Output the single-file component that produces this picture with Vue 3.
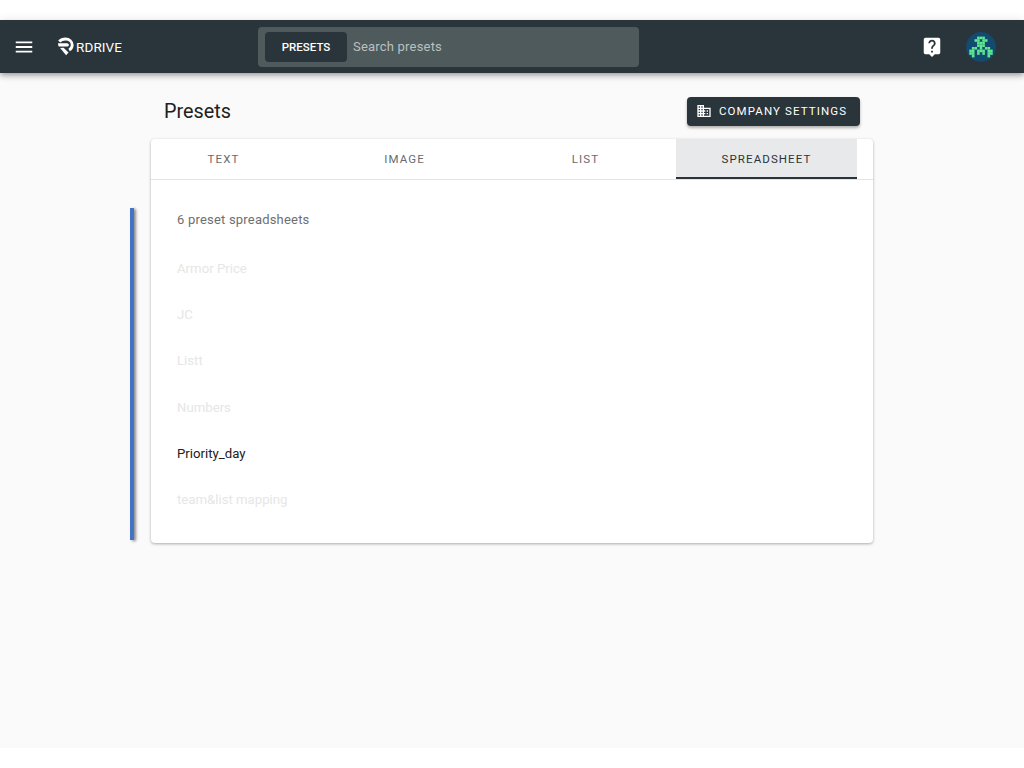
<script setup>
const tabs = ['Text', 'Image', 'List', 'Spreadsheet']
const presets = [
  { name: 'Armor Price', active: false },
  { name: 'JC', active: false },
  { name: 'Listt', active: false },
  { name: 'Numbers', active: false },
  { name: 'Priority_day', active: true },
  { name: 'team&list mapping', active: false }
]
// space invader avatar, one string per row
const invader = [
  '...###...',
  '..##.##..',
  '...###...',
  '...###...',
  '.##.#.##.',
  '##.###.##',
  '##.#.#.##',
  '.#.....#.'
]
const cells = []
invader.forEach((row, y) => {
  row.split('').forEach((c, x) => {
    if (c === '#') cells.push({ x, y })
  })
})
</script>

<template>
  <div class="app-shell">
    <header class="topbar">
      <button type="button" class="menu-btn" aria-label="Menu">
        <svg width="22" height="22" viewBox="0 0 24 24"><path fill="#fff" d="M3 18h18v-2H3v2zm0-5h18v-2H3v2zm0-7v2h18V6H3z" /></svg>
      </button>
      <div class="logo">
        <svg width="17" height="19" viewBox="0 0 19 20">
          <path fill="none" stroke="#fff" stroke-width="3.2" d="M2.500 4.500C4.200 2.600 6.800 1.600 9.500 1.600c4.300 0 7.500 2.900 7.500 6.700 0 2.500-1.300 4.500-3.500 5.700" />
          <path fill="#fff" d="M1 6.500h10.200c1.200 0 2 .8 2 1.800s-.8 1.800-2 1.800H1.800z" />
          <path fill="#fff" d="M3.500 11.800l3.800-.3 5.600 5.300-2.700 3z" />
        </svg>
        <span>RDRIVE</span>
      </div>
      <div class="search">
        <span class="search-scope">PRESETS</span>
        <span class="search-text">Search presets</span>
      </div>
      <div class="topbar-right">
        <svg width="22" height="22" viewBox="0 0 24 24"><path fill="#fff" d="M19 2H5c-1.110 0-2 .9-2 2v14c0 1.100.89 2 2 2h4l3 3 3-3h4c1.100 0 2-.9 2-2V4c0-1.100-.9-2-2-2zm-6 16h-2v-2h2v2zm2.070-7.750l-.9.920C13.450 11.900 13 12.500 13 14h-2v-.5c0-1.100.45-2.100 1.170-2.830l1.240-1.260c.37-.36.59-.86.590-1.410 0-1.100-.9-2-2-2s-2 .9-2 2H8c0-2.210 1.790-4 4-4s4 1.790 4 4c0 .88-.36 1.680-.93 2.250z" /></svg>
        <svg class="avatar" width="30" height="30" viewBox="0 0 30 30">
          <circle cx="15" cy="15" r="15" fill="#124a70" />
          <rect v-for="c in cells" :key="c.x + '-' + c.y" :x="3.300 + c.x * 2.600" :y="4.600 + c.y * 2.600" width="2.600" height="2.600" fill="#5fe88f" />
        </svg>
      </div>
    </header>

    <main class="page">
      <div class="content">
        <div class="page-head">
          <h1>Presets</h1>
          <button type="button" class="settings-btn">
            <svg width="16" height="16" viewBox="0 0 24 24"><path fill="#fff" d="M12 7V3H2v18h20V7H12zM6 19H4v-2h2v2zm0-4H4v-2h2v2zm0-4H4V9h2v2zm0-4H4V5h2v2zm4 12H8v-2h2v2zm0-4H8v-2h2v2zm0-4H8V9h2v2zm0-4H8V5h2v2zm10 12h-8v-2h2v-2h-2v-2h2v-2h-2V9h8v10zm-2-8h-2v2h2v-2zm0 4h-2v2h2v-2z" /></svg>
            Company settings
          </button>
        </div>

        <section class="card">
          <span class="side-bar"></span>
          <nav class="tabs">
            <div class="tab-row">
              <button
                v-for="tab in tabs"
                :key="tab"
                type="button"
                class="tab"
                :class="{ active: tab === 'Spreadsheet' }"
              >
                {{ tab }}
              </button>
            </div>
          </nav>
          <div class="card-body">
            <p class="count">6 preset spreadsheets</p>
            <ul class="preset-list">
              <li v-for="item in presets" :key="item.name" :class="{ enabled: item.active }">
                {{ item.name }}
              </li>
            </ul>
          </div>
        </section>
      </div>
    </main>
    <div class="page-foot"></div>
  </div>
</template>

<style scoped>
.app-shell {
  background: #ffffff;
  box-sizing: border-box;
  display: flex;
  flex-direction: column;
  font-family: Roboto, "Liberation Sans", sans-serif;
  height: 768px;
  overflow: hidden;
  padding-top: 20px;
}

.topbar {
  align-items: center;
  background: #2a343b;
  box-shadow: 0 2px 4px -1px rgba(0, 0, 0, 0.2), 0 4px 5px rgba(0, 0, 0, 0.14), 0 1px 10px rgba(0, 0, 0, 0.12);
  display: flex;
  flex: 0 0 53px;
  padding: 0 28px 0 13px;
  position: relative;
  z-index: 2;
}

.menu-btn {
  background: none;
  border: 0;
  display: flex;
  padding: 0;
}

.logo {
  align-items: center;
  color: #ffffff;
  display: flex;
  flex: 0 0 201px;
  gap: 2px;
  margin-left: 22px;
}

.logo span {
  font-size: 13.500px;
  font-weight: 400;
  letter-spacing: 0.1px;
}

.search {
  align-items: center;
  background: #4e5a5c;
  border-radius: 4px;
  box-sizing: border-box;
  display: flex;
  flex: 0 0 381px;
  height: 40px;
  padding: 0 7px;
}

.search-scope {
  background: #2a343b;
  border-radius: 4px;
  color: #ffffff;
  font-size: 11.500px;
  font-weight: 500;
  line-height: 30px;
  text-align: center;
  width: 82px;
}

.search-text {
  color: #b9c0c1;
  font-size: 13px;
  letter-spacing: 0.2px;
  margin-left: 6px;
}

.topbar-right {
  align-items: center;
  display: flex;
  gap: 23px;
  margin-left: auto;
}

.page {
  background: #fafafa;
  flex: 0 0 675px;
}

.content {
  margin-left: 151px;
  width: 722px;
}

.page-head {
  align-items: center;
  box-sizing: border-box;
  display: flex;
  height: 66px;
  justify-content: space-between;
  padding: 10px 13px 0;
}

.page-head h1 {
  color: #212121;
  font-size: 19.800px;
  font-weight: 400;
  margin: 0;
}

.settings-btn {
  align-items: center;
  background: #2a343b;
  border: 0;
  border-radius: 4px;
  box-shadow: 0 2px 3px rgba(0, 0, 0, 0.3);
  color: #ffffff;
  display: flex;
  font-family: inherit;
  font-size: 11.500px;
  font-weight: 400;
  gap: 7px;
  height: 29px;
  letter-spacing: 1.100px;
  padding: 0 0 0 9px;
  text-transform: uppercase;
  white-space: nowrap;
  width: 173px;
}

.card {
  background: #ffffff;
  border-radius: 4px;
  box-shadow: 0 1px 3px rgba(0, 0, 0, 0.32);
  position: relative;
}

.side-bar {
  background: #4472c4;
  bottom: 3px;
  box-shadow: 2px 1px 3px rgba(0, 0, 0, 0.45);
  left: -21px;
  position: absolute;
  top: 69px;
  width: 4px;
}

.tabs {
  border-bottom: 1px solid #e4e4e4;
  overflow: hidden;
}

.tab-row {
  display: flex;
  margin-left: -18px;
}

.tab {
  background: none;
  border: 0;
  border-bottom: 2px solid transparent;
  color: #666c6f;
  flex: 0 0 181px;
  font-family: inherit;
  font-size: 11.500px;
  font-weight: 400;
  height: 40px;
  letter-spacing: 1.100px;
  padding: 2px 0 0;
  text-transform: uppercase;
}

.tab.active {
  background: #e7e9ea;
  border-bottom-color: #2a343b;
  color: #2a343b;
}

.card-body {
  padding: 32px 26px 20px;
}

.count {
  color: #6f6f6f;
  font-size: 13px;
  letter-spacing: 0.2px;
  line-height: 16px;
  margin: 0 0 18px;
}

.preset-list {
  list-style: none;
  margin: 0;
  padding: 0;
}

.preset-list li {
  color: #e6e6e6;
  font-size: 13.200px;
  height: 46.200px;
  line-height: 46px;
}

.preset-list li.enabled {
  color: #212121;
}

.page-foot {
  flex: 1;
}
</style>
